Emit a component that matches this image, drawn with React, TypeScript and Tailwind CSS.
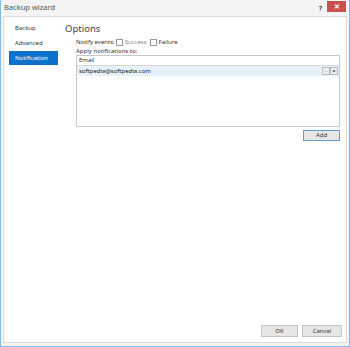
import React from "react";

export default function App() {
  const font = { fontFamily: '"Segoe UI", "Noto Sans", "Liberation Sans", sans-serif' };
  return (
    <div
      className="w-[350px] h-[347px] bg-[#f4f4f4] border-x border-b border-[#83b9ec] flex flex-col text-[#333]"
      style={font}
    >
      {/* title bar */}
      <div className="h-[16px] flex items-center pl-[3px] pr-[3px] shrink-0">
        <span className="text-[7.5px] text-[#555] leading-none">Backup wizard</span>
        <span className="ml-auto mr-[5px] text-[7px] font-bold text-[#444] leading-none">?</span>
        <div className="w-[19px] h-[11px] bg-[#c9504d] flex items-center justify-center mt-[-3px]">
          <span className="text-white text-[7px] leading-none font-bold">✕</span>
        </div>
      </div>
      {/* content panel */}
      <div className="flex-1 mx-[2px] mb-[3px] bg-white border border-[#dcdcdc] flex flex-col">
        <div className="flex flex-1">
          {/* sidebar */}
          <div className="w-[59px] pt-[4px] pl-[5px] flex flex-col shrink-0">
            <div className="h-[15px] flex items-center pl-[6px] text-[6px] text-[#333]">Backup</div>
            <div className="h-[15px] flex items-center pl-[6px] text-[6px] text-[#333]">Advanced</div>
            <div className="h-[14px] w-[49px] flex items-center pl-[6px] text-[6px] text-white bg-[#0a72c9]">Notification</div>
          </div>
          {/* main */}
          <div className="flex-1 pt-[7px] pl-[2px] pr-[6px] flex flex-col">
            <div className="text-[9.5px] text-[#444] leading-none h-[11px]">Options</div>
            <div className="pl-[11px] flex flex-col">
              <div className="flex items-center h-[10px] mt-[2px] text-[6px] text-[#333]">
                <span>Notify events:</span>
                <span className="ml-[1px] w-[7px] h-[7px] border border-[#999] bg-white"></span>
                <span className="ml-[2px] text-[#888]">Success</span>
                <span className="ml-[3px] w-[7px] h-[7px] border border-[#999] bg-white"></span>
                <span className="ml-[2px]">Failure</span>
              </div>
              <div className="h-[8px] flex items-center text-[6px] text-[#333]">Apply notifications to:</div>
              <div className="h-[72px] border border-[#c8c8c8] flex flex-col">
                <div className="h-[10px] border-b border-[#d8d8d8] flex items-center pl-[2px] text-[6px] text-[#333]">Email</div>
                <div className="h-[10px] bg-[#e5f1fb] flex items-center pl-[2px] text-[6px] text-[#222]">
                  <span>softpedia@softpedia.com</span>
                  <div className="ml-auto flex h-[8px] mr-[1px]">
                    <div className="w-[8px] h-[8px] border border-[#bbb] bg-[#ececec] flex items-center justify-center text-[5px] leading-none text-[#777]">···</div>
                    <div className="w-[8px] h-[8px] border border-[#bbb] bg-[#ececec] flex items-center justify-center text-[6px] leading-none text-[#333] font-bold">×</div>
                  </div>
                </div>
              </div>
              <div className="flex justify-end mt-[3px]">
                <div className="w-[37px] h-[11px] bg-[#e6e6e6] border border-[#5a9ee0] flex items-center justify-center text-[6px] text-[#333]">Add</div>
              </div>
            </div>
          </div>
        </div>
        <div className="flex justify-end gap-[4px] pr-[4px] pb-[5px]">
          <div className="w-[37px] h-[12px] bg-[#e6e6e6] border border-[#c4c4c4] flex items-center justify-center text-[6px] text-[#333]">OK</div>
          <div className="w-[40px] h-[12px] bg-[#e6e6e6] border border-[#c4c4c4] flex items-center justify-center text-[6px] text-[#333]">Cancel</div>
        </div>
      </div>
    </div>
  );
}
